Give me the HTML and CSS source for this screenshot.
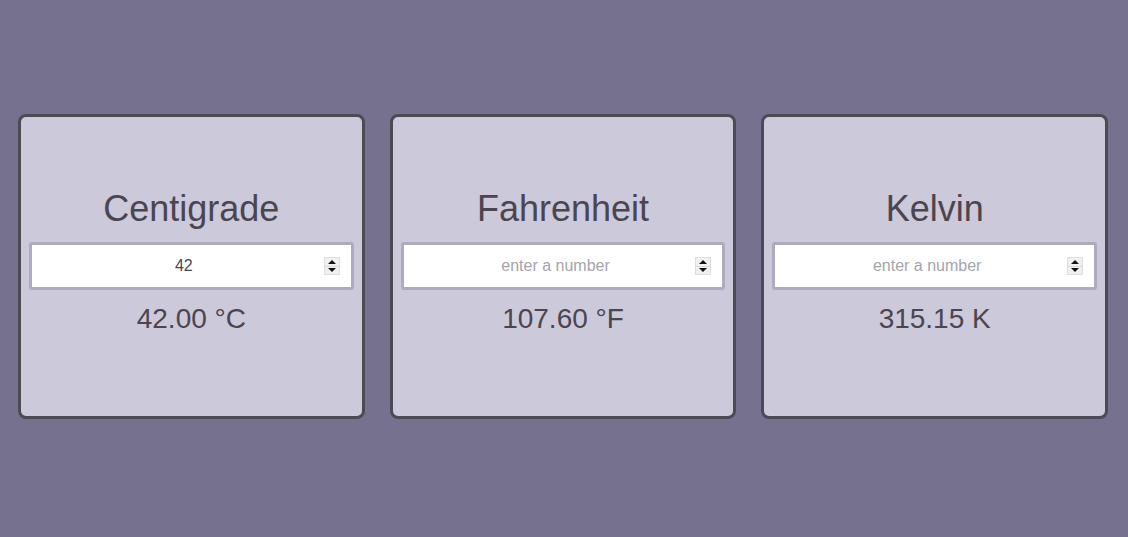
FILE: index.html
```html
<!DOCTYPE html>
<html lang="en">
<head>
<meta charset="utf-8">
<title>Temperature converter</title>
<link rel="stylesheet" href="styles.css">
</head>
<body>
<main class="row">
  <section class="card">
    <h2 class="title">Centigrade</h2>
    <div class="field">
      <input class="num" type="number" value="42" placeholder="enter a number">
      <span class="spin"><span class="up"></span><span class="down"></span></span>
    </div>
    <p class="result">42.00 °C</p>
  </section>
  <section class="card">
    <h2 class="title">Fahrenheit</h2>
    <div class="field">
      <input class="num" type="number" placeholder="enter a number">
      <span class="spin"><span class="up"></span><span class="down"></span></span>
    </div>
    <p class="result">107.60 °F</p>
  </section>
  <section class="card">
    <h2 class="title">Kelvin</h2>
    <div class="field">
      <input class="num" type="number" placeholder="enter a number">
      <span class="spin"><span class="up"></span><span class="down"></span></span>
    </div>
    <p class="result">315.15 K</p>
  </section>
</main>
</body>
</html>
```
FILE: styles.css
```css
html, body {
  margin: 0;
  padding: 0;
}
body {
  background: #777190;
  font-family: "Liberation Sans", Arial, sans-serif;
  color: #4a4552;
  height: 537px;
  overflow: hidden;
}
.row {
  display: flex;
  gap: 25px;
  padding: 114px 20px 0 18px;
}
.card {
  flex: 1;
  box-sizing: border-box;
  height: 305px;
  background: #ccc9da;
  border: 3px solid #4d4a55;
  border-radius: 8px;
  padding-top: 71px;
  display: flex;
  flex-direction: column;
  align-items: stretch;
}
.title {
  margin: 0;
  font-size: 36px;
  font-weight: normal;
  line-height: 41px;
  text-align: center;
  color: #4b4550;
}
.field {
  position: relative;
  margin: 13px 8px 0 8px;
}
.num {
  display: block;
  box-sizing: border-box;
  width: 100%;
  height: 48px;
  border: 3px solid #aeaac0;
  border-radius: 3px;
  background: #fff;
  padding: 0 18px 0 3px;
  font-family: "Liberation Sans", Arial, sans-serif;
  font-size: 16px;
  color: #4a4552;
  text-align: center;
  outline: none;
  -moz-appearance: textfield;
  appearance: textfield;
}
.num::placeholder {
  color: #a6a4ad;
}
.num::-webkit-inner-spin-button,
.num::-webkit-outer-spin-button {
  -webkit-appearance: none;
  margin: 0;
}
.spin {
  position: absolute;
  right: 14px;
  top: 15px;
  width: 16px;
  height: 18px;
  box-sizing: border-box;
  background: #d9d9d9;
  border: 1px solid #dedede;
  display: flex;
  flex-direction: column;
  gap: 1px;
}
.up, .down {
  flex: 1;
  background: #f0f0f0;
  position: relative;
}
.up::after, .down::after {
  content: "";
  position: absolute;
  left: 50%;
  top: 50%;
  width: 0;
  height: 0;
  border-left: 4px solid transparent;
  border-right: 4px solid transparent;
  transform: translate(-50%, -50%);
}
.up::after {
  border-bottom: 4px solid #111;
}
.down::after {
  border-top: 4px solid #111;
}
.result {
  margin: 13px 0 0 0;
  font-size: 28px;
  line-height: 32px;
  text-align: center;
  color: #4b4550;
}
```
